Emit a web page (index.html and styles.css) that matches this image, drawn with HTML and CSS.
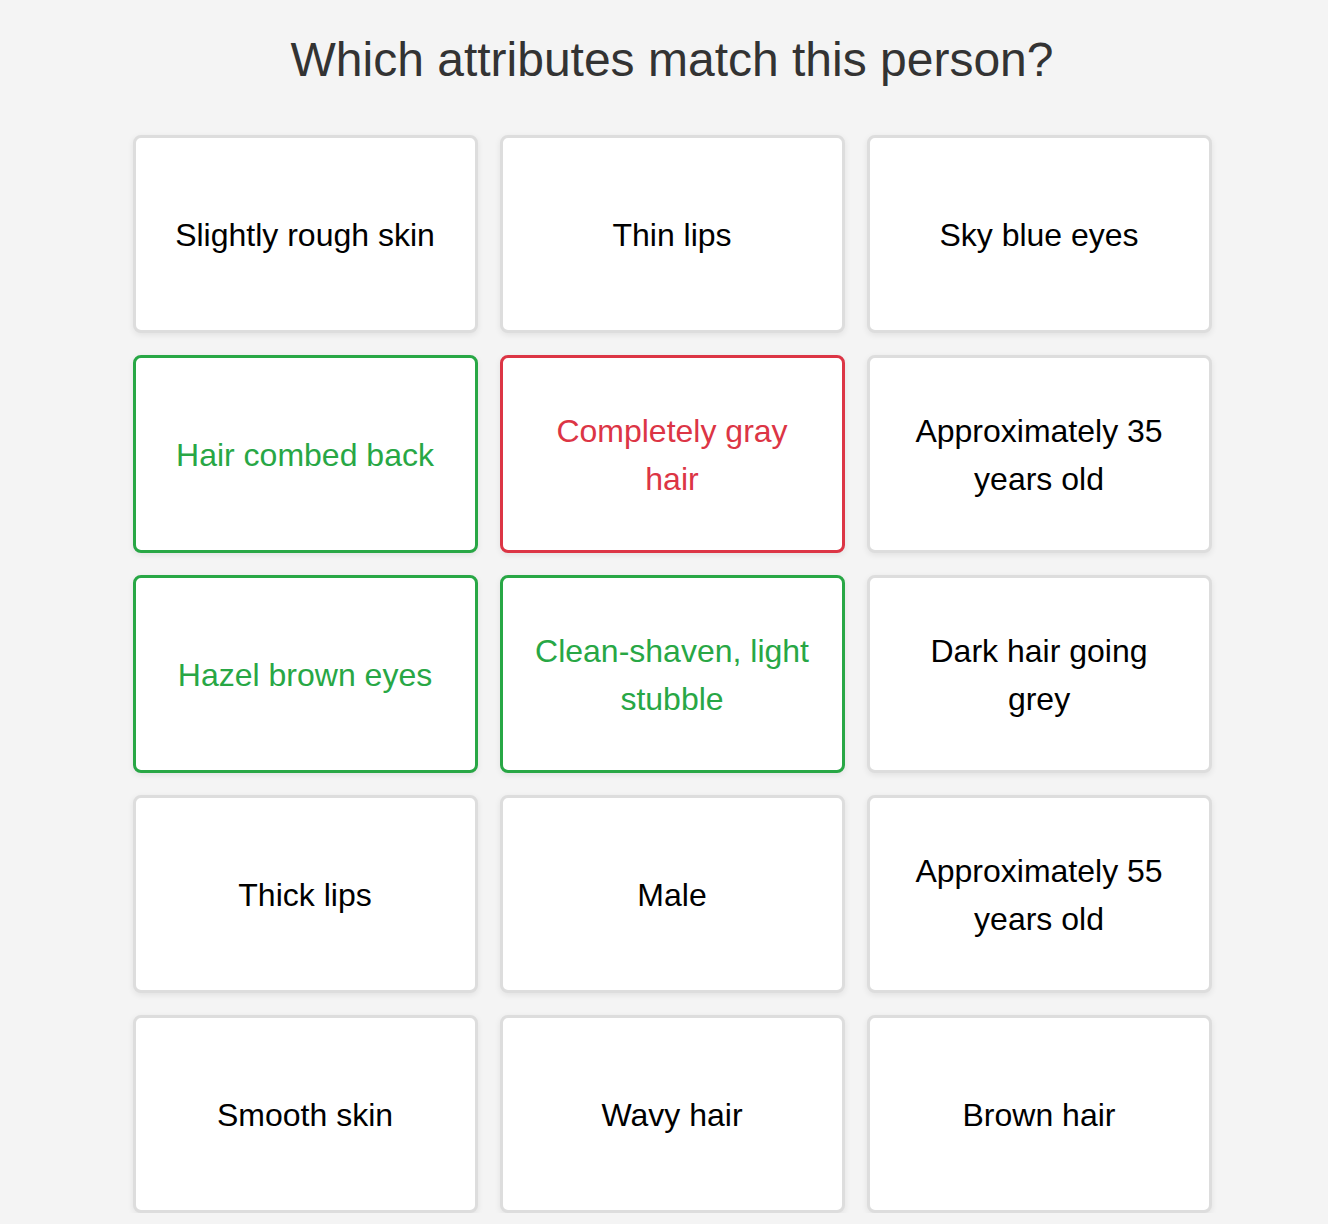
FILE: index.html
```html
<!DOCTYPE html>
<html lang="en">
<head>
<meta charset="utf-8">
<title>Which attributes match this person?</title>
<link rel="stylesheet" href="styles.css">
</head>
<body>
<main class="page">
  <h1 class="title">Which attributes match this person?</h1>
  <div class="grid">
    <div class="card">Slightly rough skin</div>
    <div class="card">Thin lips</div>
    <div class="card">Sky blue eyes</div>
    <div class="card card--correct">Hair combed back</div>
    <div class="card card--wrong">Completely gray hair</div>
    <div class="card">Approximately 35 years old</div>
    <div class="card card--correct">Hazel brown eyes</div>
    <div class="card card--correct">Clean-shaven, light stubble</div>
    <div class="card">Dark hair going grey</div>
    <div class="card">Thick lips</div>
    <div class="card">Male</div>
    <div class="card">Approximately 55 years old</div>
    <div class="card">Smooth skin</div>
    <div class="card">Wavy hair</div>
    <div class="card">Brown hair</div>
  </div>
</main>
</body>
</html>
```
FILE: styles.css
```css
html, body {
  margin: 0;
  padding: 0;
  background: #f4f4f4;
  font-family: "Liberation Sans", Arial, sans-serif;
}

.page {
  padding: 32px 0 0 16px;
}

.title {
  margin: 0;
  text-align: center;
  font-size: 48px;
  font-weight: normal;
  color: #333;
  line-height: 55px;
}

.grid {
  margin-top: 48px;
  display: grid;
  grid-template-columns: repeat(3, 345px);
  grid-auto-rows: 198px;
  column-gap: 22px;
  row-gap: 22px;
  justify-content: center;
}

.card {
  box-sizing: border-box;
  display: flex;
  align-items: center;
  justify-content: center;
  text-align: center;
  padding: 2px 30px 0;
  background: #fff;
  border: 3px solid #ddd;
  border-radius: 8px;
  box-shadow: 0 2px 6px rgba(0, 0, 0, 0.08);
  font-size: 32px;
  line-height: 48px;
  color: #000;
}

.card--correct {
  border-color: #28a745;
  color: #28a745;
}

.card--wrong {
  border-color: #dc3545;
  color: #dc3545;
}
```
